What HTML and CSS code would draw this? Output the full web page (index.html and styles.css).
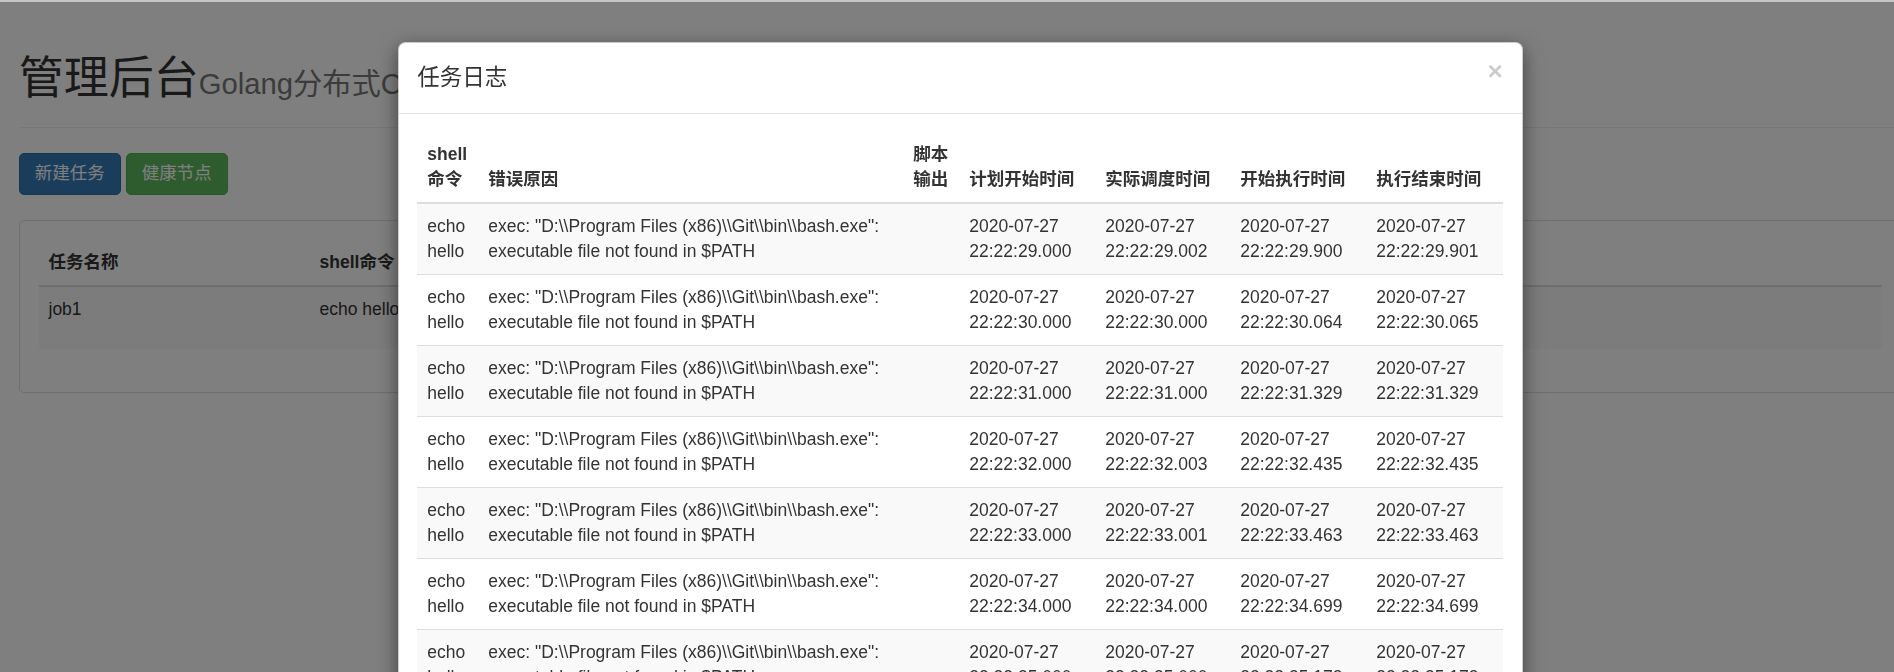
FILE: index.html
```html
<!DOCTYPE html>
<html lang="zh-CN">
<head>
  <meta charset="UTF-8" />
  <meta name="viewport" content="width=device-width, initial-scale=1.0"/>
  <title>管理后台</title>
  <link rel="stylesheet" href="styles.css">
</head>
<body>
  <div class="container-fluid">
    <div class="page-header">
      <h1>管理后台<small>Golang分布式Crontab</small></h1>
    </div>

    <div class="toolbar">
      <button class="btn btn-primary">新建任务</button>
      <button class="btn btn-success">健康节点</button>
    </div>

    <div class="panel">
      <table class="table job-table">
        <colgroup>
          <col style="width: 271px">
          <col style="width: 271px">
          <col style="width: 271px">
          <col>
        </colgroup>
        <thead>
          <tr>
            <th>任务名称</th>
            <th>shell命令</th>
            <th>cron表达式</th>
            <th>任务操作</th>
          </tr>
        </thead>
        <tbody>
          <tr>
            <td>job1</td>
            <td>echo hello</td>
            <td>*/5 * * * * * *</td>
            <td class="ops">
              <button class="btn btn-info">编辑</button>
              <button class="btn btn-danger">删除</button>
              <button class="btn btn-warning">强杀</button>
              <button class="btn btn-success">日志</button>
            </td>
          </tr>
        </tbody>
      </table>
    </div>
  </div>

  <div class="backdrop"></div>

  <div class="modal">
    <div class="modal-dialog">
      <div class="modal-content">
        <div class="modal-header">
          <h4 class="modal-title">任务日志</h4>
          <button class="close">&times;</button>
        </div>
        <div class="modal-body">
          <table class="table log-table">
            <colgroup>
              <col style="width: 61px">
              <col style="width: 425px">
              <col style="width: 56px">
              <col style="width: 136px">
              <col style="width: 135px">
              <col style="width: 136px">
              <col>
            </colgroup>
            <thead>
              <tr>
                <th>shell命令</th>
                <th>错误原因</th>
                <th>脚本输出</th>
                <th>计划开始时间</th>
                <th>实际调度时间</th>
                <th>开始执行时间</th>
                <th>执行结束时间</th>
              </tr>
            </thead>
            <tbody id="logRows"></tbody>
          </table>
        </div>
      </div>
    </div>
  </div>

  <script>
    const logs = [
      ['29.000', '29.002', '29.900', '29.901'],
      ['30.000', '30.000', '30.064', '30.065'],
      ['31.000', '31.000', '31.329', '31.329'],
      ['32.000', '32.003', '32.435', '32.435'],
      ['33.000', '33.001', '33.463', '33.463'],
      ['34.000', '34.000', '34.699', '34.699'],
      ['35.000', '35.000', '35.173', '35.173'],
      ['36.000', '36.000', '36.210', '36.211']
    ];

    const err = 'exec: "D:\\\\Program Files (x86)\\\\Git\\\\bin\\\\bash.exe": executable file not found in $PATH';

    document.getElementById('logRows').innerHTML = logs.map(times => `
      <tr>
        <td>echo hello</td>
        <td class="err"></td>
        <td></td>
        ${times.map(t => `<td>2020-07-27 22:22:${t}</td>`).join('')}
      </tr>`).join('');

    document.querySelectorAll('.err').forEach(td => td.textContent = err);
  </script>
</body>
</html>
```

FILE: styles.css
```css
* {
  box-sizing: border-box;
}

html, body {
  margin: 0;
}

body {
  width: 1920px;
  overflow: hidden;
  font-family: "Liberation Sans", Arial, "Noto Sans CJK SC", sans-serif;
  font-size: 17.5px;
  line-height: 25px;
  color: #333;
  background-color: #fff;
}

.container-fluid {
  padding: 0 18.75px;
}

.page-header {
  margin: 53.5px 0 25px;
  padding-bottom: 11.25px;
  border-bottom: 1px solid #eee;
}

.page-header h1 {
  margin: 0 0 12.5px;
  font-size: 45px;
  line-height: 49.5px;
  font-weight: 400;
}

.page-header small {
  font-size: 65%;
  line-height: 1;
  color: #777;
}

.toolbar {
  display: flex;
  gap: 5px;
  margin-bottom: 25px;
}

.btn {
  display: inline-block;
  padding: 7.5px 15px;
  font-family: inherit;
  font-size: 17.5px;
  line-height: 25px;
  color: #fff;
  border: 1px solid transparent;
  border-radius: 5px;
}

.btn-primary { background-color: #337ab7; border-color: #2e6da4; }
.btn-success { background-color: #5cb85c; border-color: #4cae4c; }
.btn-info { background-color: #5bc0de; border-color: #46b8da; }
.btn-danger { background-color: #d9534f; border-color: #d43f3a; }
.btn-warning { background-color: #f0ad4e; border-color: #eea236; }

.panel {
  padding: 18.75px;
  border: 1px solid #ddd;
  border-radius: 5px;
}

.table {
  width: 100%;
  border-collapse: collapse;
  table-layout: fixed;
}

.table th, .table td {
  padding: 10px;
  text-align: left;
  vertical-align: top;
}

.table th {
  vertical-align: bottom;
  font-weight: bold;
  border-bottom: 2.5px solid #ddd;
}

.table td {
  border-top: 1px solid #ddd;
}

.table tbody tr:nth-child(odd) {
  background-color: #f9f9f9;
}

.job-table {
  margin-bottom: 25px;
}

.ops .btn {
  margin-right: 1px;
}

.backdrop {
  position: fixed;
  top: 0;
  left: 0;
  right: 0;
  bottom: 0;
  background-color: rgba(0, 0, 0, 0.5);
  border-top: 2px solid #c6c6c6;
}

.modal {
  position: fixed;
  top: 0;
  left: 0;
  bottom: 0;
  width: 1920px;
  overflow: hidden;
}

.modal-dialog {
  width: 1125px;
  margin: 42px auto 0;
}

.modal-content {
  background-color: #fff;
  border: 1px solid rgba(0, 0, 0, 0.2);
  border-radius: 7.5px;
  box-shadow: 0 6px 19px rgba(0, 0, 0, 0.5);
}

.modal-header {
  display: flex;
  justify-content: space-between;
  align-items: flex-start;
  padding: 18.75px;
  border-bottom: 1px solid #e5e5e5;
}

.modal-title {
  margin: 0;
  font-size: 22.5px;
  line-height: 32px;
  font-weight: 400;
}

.close {
  margin-top: -4px;
  padding: 0;
  background: none;
  border: 0;
  font-family: inherit;
  font-size: 26.25px;
  font-weight: bold;
  line-height: 1;
  color: #000;
  opacity: 0.2;
}

.modal-body {
  padding: 18.75px;
}
```
